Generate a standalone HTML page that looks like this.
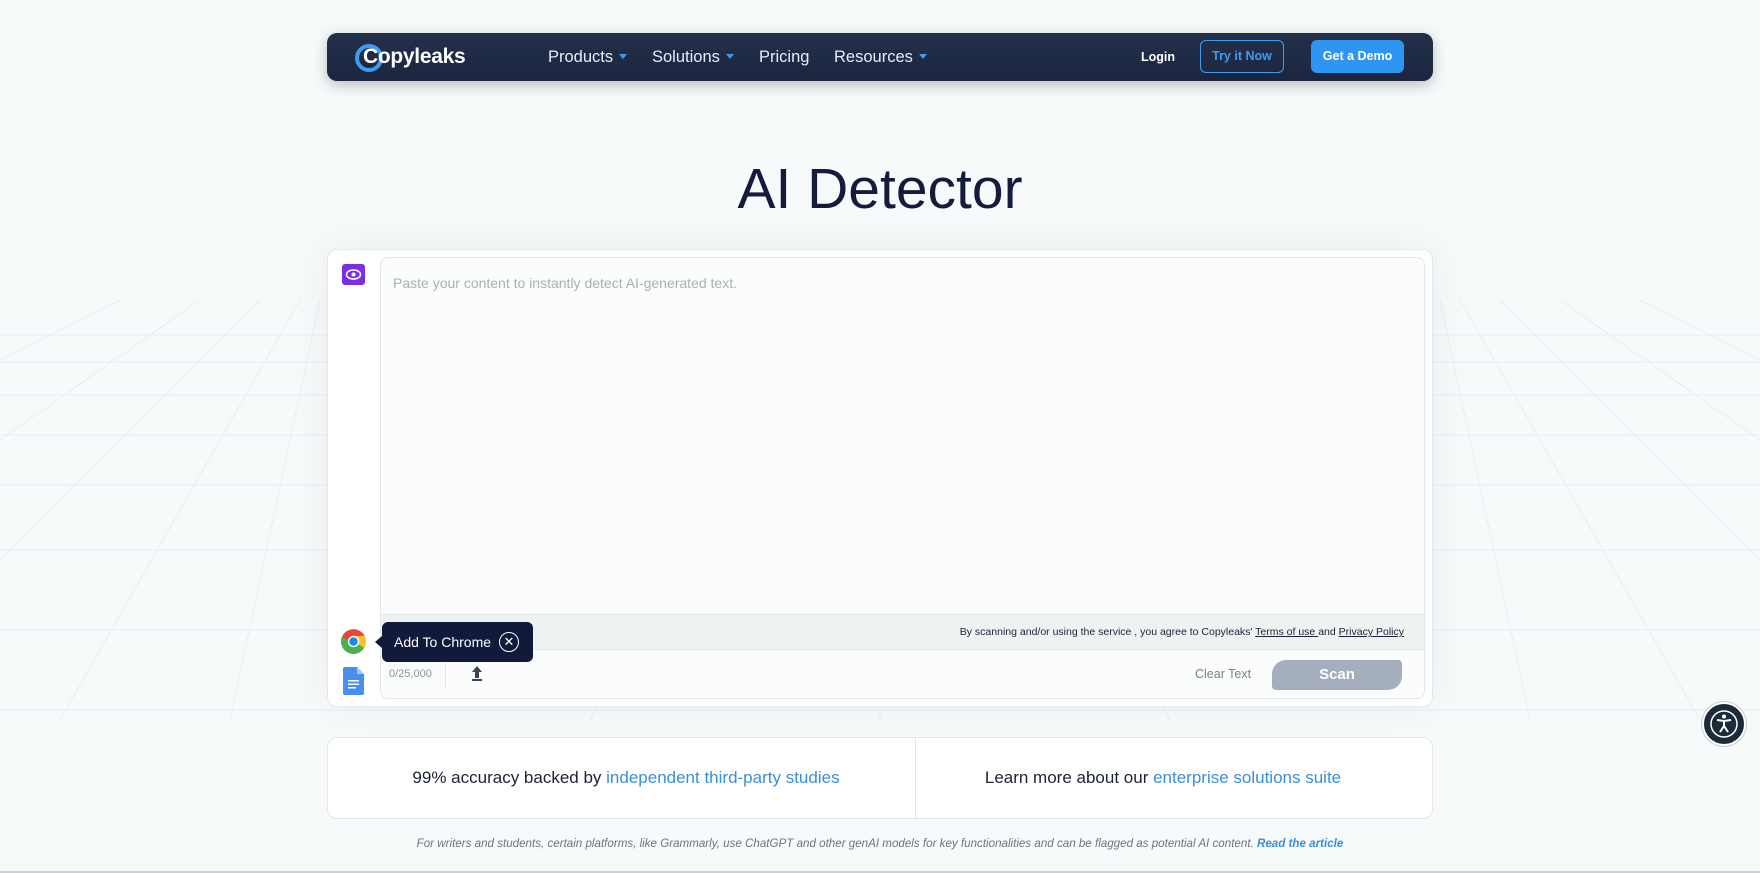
<!DOCTYPE html>
<html><head><meta charset="utf-8"><style>
*{box-sizing:border-box;margin:0;padding:0}
body{width:1760px;height:873px;overflow:hidden;background:#f7fafb;font-family:"Liberation Sans",sans-serif;position:relative}
.grid{position:absolute;left:0;top:300px;width:1760px;height:420px}
.nav{position:absolute;left:327px;top:33px;width:1106px;height:48px;border-radius:10px;background:linear-gradient(#24304a,#1b2540);box-shadow:0 4px 14px rgba(0,0,0,.25);color:#fff}
.nav .it{position:absolute;top:15px;font-size:16.5px;color:#e8ecf3}
.car{display:inline-block;width:0;height:0;border-left:4px solid transparent;border-right:4px solid transparent;border-top:5px solid #3f9bf0;margin-left:6px;vertical-align:3px}
h1{position:absolute;left:0;width:1760px;text-align:center;top:156px;font-size:57px;font-weight:400;color:#141b3c}
.card{position:absolute;left:327px;top:249px;width:1106px;height:458px;background:#fff;border:1px solid #e4e8ec;border-radius:10px;box-shadow:0 0 40px rgba(0,0,0,.06)}
.ta{position:absolute;left:380px;top:257px;width:1045px;height:442px;border:1px solid #e3e7eb;border-radius:8px;background:#fbfdfd;overflow:hidden}
.info{position:absolute;left:327px;top:737px;width:1106px;height:82px;background:#fff;border:1px solid #e2e6ea;border-radius:10px}
.info div{position:absolute;top:30px;font-size:17px;color:#1d2236;text-align:center}
.info span{color:#3a8fd8}
</style></head><body>
<svg class="grid" viewBox="0 0 1760 420" preserveAspectRatio="none">
<g stroke="#eaeef1" stroke-width="1" fill="none">
<line x1="0" y1="35" x2="1760" y2="35"/><line x1="0" y1="62" x2="1760" y2="62"/><line x1="0" y1="95" x2="1760" y2="95"/><line x1="0" y1="135" x2="1760" y2="135"/><line x1="0" y1="185" x2="1760" y2="185"/><line x1="0" y1="250" x2="1760" y2="250"/><line x1="0" y1="330" x2="1760" y2="330"/><line x1="0" y1="410" x2="1760" y2="410"/>
<line x1="120" y1="0" x2="0" y2="60"/><line x1="200" y1="0" x2="0" y2="140"/><line x1="260" y1="0" x2="0" y2="260"/><line x1="300" y1="0" x2="60" y2="420"/><line x1="320" y1="0" x2="230" y2="420"/>
<line x1="1640" y1="0" x2="1760" y2="60"/><line x1="1560" y1="0" x2="1760" y2="140"/><line x1="1500" y1="0" x2="1760" y2="260"/><line x1="1460" y1="0" x2="1700" y2="420"/><line x1="1440" y1="0" x2="1530" y2="420"/>
<line x1="600" y1="400" x2="590" y2="420"/><line x1="880" y1="400" x2="880" y2="420"/><line x1="1160" y1="400" x2="1170" y2="420"/>
</g></svg>
<div style="position:absolute;left:0;top:871px;width:1760px;height:2px;background:#c9d0d6"></div>
<div class="nav">
<svg style="position:absolute;left:27px;top:10px" width="30" height="30" viewBox="0 0 30 30"><circle cx="15" cy="15" r="12" fill="none" stroke="#3f9bf0" stroke-width="4"/></svg>
<div style="position:absolute;left:36px;top:12px;font-size:21px;font-weight:700;color:#fff;letter-spacing:-0.3px">Copyleaks</div>
<div class="it" style="left:221px">Products<span class="car"></span></div>
<div class="it" style="left:325px">Solutions<span class="car"></span></div>
<div class="it" style="left:432px">Pricing</div>
<div class="it" style="left:507px">Resources<span class="car"></span></div>
<div style="position:absolute;left:814px;top:17px;font-size:12.5px;font-weight:700">Login</div>
<div style="position:absolute;left:873px;top:7px;width:84px;height:33px;border:1px solid #3f9bf0;border-radius:6px;color:#3f9bf0;font-size:12.5px;font-weight:700;text-align:center;line-height:31px">Try it Now</div>
<div style="position:absolute;left:984px;top:7px;width:93px;height:33px;background:#2f95f3;border-radius:6px;font-size:12.5px;font-weight:700;text-align:center;line-height:33px">Get a Demo</div>
</div>
<h1>AI Detector</h1>
<div class="card"></div>
<div style="position:absolute;left:342px;top:264px;width:23px;height:21px;background:#7a2ee8;border-radius:3px"><svg width="23" height="21" viewBox="0 0 23 21"><ellipse cx="11.5" cy="10.5" rx="7" ry="4.5" fill="none" stroke="#fff" stroke-width="1.5"/><circle cx="11.5" cy="10.5" r="2" fill="#fff"/></svg></div>
<div class="ta">
<div style="position:absolute;left:12px;top:17px;font-size:14px;color:#a9b0b6">Paste your content to instantly detect AI-generated text.</div>
<div style="position:absolute;left:0;top:356px;width:100%;height:36px;background:#eef2f3;border-top:1px solid #e3e7eb;border-bottom:1px solid #e3e7eb"></div>
<div style="position:absolute;right:20px;top:368px;font-size:10.5px;color:#1d2236">By scanning and/or using the service , you agree to Copyleaks' <u>Terms of use </u>and <u>Privacy Policy</u></div>
<div style="position:absolute;left:8px;top:410px;font-size:11px;color:#8a9198">0/25,000</div>
<div style="position:absolute;left:64px;top:400px;width:1px;height:30px;background:#e3e7eb"></div>
<svg style="position:absolute;left:88px;top:406px" width="16" height="18" viewBox="0 0 16 18"><path d="M8 2 L3 8 H6 V14 H10 V8 H13 Z" fill="#3d4455"/><rect x="3" y="15" width="10" height="2" fill="#3d4455"/></svg>
<div style="position:absolute;left:814px;top:409px;font-size:12.5px;color:#7b838b">Clear Text</div>
<div style="position:absolute;left:891px;top:402px;width:130px;height:30px;background:#a4aebd;border-radius:14px 4px 14px 4px;color:#fff;font-weight:700;font-size:15px;text-align:center;line-height:30px">Scan</div>
</div>
<svg style="position:absolute;left:340px;top:628px" width="27" height="27" viewBox="0 0 24 24"><circle cx="12" cy="12" r="11" fill="#e8453c"/><path d="M12 12 L2.5 17.5 A11 11 0 0 1 1.5 8 Z" fill="#4caf50"/><path d="M12 12 L2.5 17.5 A11 11 0 0 0 21.5 17.5 Z" fill="#4caf50"/><path d="M12 12 L21.5 17.5 A11 11 0 0 0 22 7 L12 7Z" fill="#fbc02d"/><circle cx="12" cy="12" r="5" fill="#fff"/><circle cx="12" cy="12" r="3.8" fill="#1e88e5"/></svg>
<div style="position:absolute;left:382px;top:622px;width:151px;height:40px;background:#111a3b;border-radius:6px;color:#fff;font-size:14px;line-height:40px;padding-left:12px">Add To Chrome<span style="position:absolute;left:117px;top:10px;width:20px;height:20px;border:1.5px solid #fff;border-radius:50%;line-height:17px;text-align:center;font-size:13px">✕</span></div>
<div style="position:absolute;left:375px;top:636px;width:0;height:0;border-top:6px solid transparent;border-bottom:6px solid transparent;border-right:7px solid #111a3b"></div>
<svg style="position:absolute;left:343px;top:667px" width="21" height="28" viewBox="0 0 21 28"><path d="M0 2 Q0 0 2 0 H14 L21 7 V26 Q21 28 19 28 H2 Q0 28 0 26Z" fill="#4a8ef0"/><path d="M14 0 V7 H21Z" fill="#a5c6f8"/><rect x="5" y="13" width="11" height="1.5" fill="#fff"/><rect x="5" y="16.5" width="11" height="1.5" fill="#fff"/><rect x="5" y="20" width="8" height="1.5" fill="#fff"/></svg>
<div class="info"><div style="left:78px;width:440px">99% accuracy backed by <span>independent third-party studies</span></div><div style="left:620px;width:430px">Learn more about our <span>enterprise solutions suite</span></div><i style="position:absolute;left:587px;top:0;width:1px;height:80px;background:#e2e6ea"></i></div>
<div style="position:absolute;left:0;width:1760px;text-align:center;top:837px;font-size:11.6px;font-style:italic;color:#6d747c">For writers and students, certain platforms, like Grammarly, use ChatGPT and other genAI models for key functionalities and can be flagged as potential AI content. <b style="color:#3a8fd8">Read the article</b></div>
<div style="position:absolute;left:1702px;top:702px;width:44px;height:44px;border-radius:50%;background:#1d2a3a;border:2px solid #fff;box-shadow:0 0 0 1px #ccc"><svg width="40" height="40" viewBox="0 0 40 40"><circle cx="20" cy="20" r="13" fill="none" stroke="#fff" stroke-width="1.5"/><circle cx="20" cy="12.5" r="2" fill="#fff"/><path d="M13 16 L20 17 L27 16 M20 17 V22 L16 28 M20 22 L24 28" stroke="#fff" stroke-width="2" fill="none"/></svg></div>
</body></html>
